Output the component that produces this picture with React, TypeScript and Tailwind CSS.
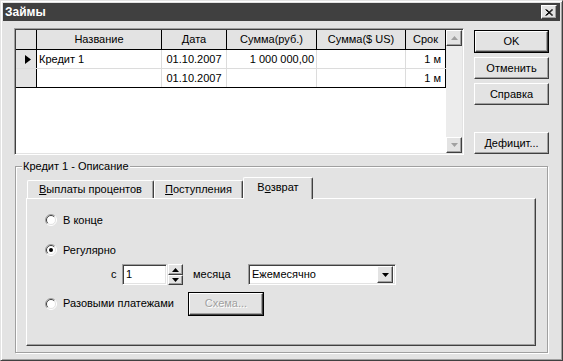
import React from 'react';

const raised =
  'border border-t-white border-l-white border-r-[#404040] border-b-[#404040] shadow-[inset_-1px_-1px_0_#a0a0a0]';
const sunken =
  'border border-t-[#a0a0a0] border-l-[#a0a0a0] border-r-white border-b-white shadow-[inset_1px_1px_0_#404040,inset_-1px_-1px_0_#e3e3e3]';

function Btn({
  label,
  isDefault,
  disabled,
  className = '',
}: {
  label: string;
  isDefault?: boolean;
  disabled?: boolean;
  className?: string;
}) {
  const text = disabled ? 'text-[#a0a0a0] [text-shadow:1px_1px_0_#ffffff]' : 'text-black';
  if (isDefault) {
    return (
      <div className={`border border-black ${className}`}>
        <div className={`h-full flex items-center justify-center ${raised} ${text}`}>{label}</div>
      </div>
    );
  }
  return <div className={`flex items-center justify-center ${raised} ${text} ${className}`}>{label}</div>;
}

function Radio({ checked }: { checked?: boolean }) {
  return (
    <svg width="12" height="12" viewBox="0 0 12 12" className="shrink-0">
      <circle cx="6" cy="6" r="5" fill="white" />
      <path d="M2.1 9.9 A5.5 5.5 0 0 1 9.9 2.1" fill="none" stroke="#a0a0a0" strokeWidth="1" />
      <path d="M9.9 2.1 A5.5 5.5 0 0 1 2.1 9.9" fill="none" stroke="#ffffff" strokeWidth="1" />
      <path d="M2.8 9.2 A4.5 4.5 0 0 1 9.2 2.8" fill="none" stroke="#404040" strokeWidth="1" />
      <path d="M9.2 2.8 A4.5 4.5 0 0 1 2.8 9.2" fill="none" stroke="#e3e3e3" strokeWidth="1" />
      {checked && <circle cx="6" cy="6" r="2" fill="black" />}
    </svg>
  );
}

function ArrowUp({ color = 'black' }: { color?: string }) {
  return (
    <svg width="7" height="4" viewBox="0 0 7 4">
      <polygon points="0,4 3.5,0 7,4" fill={color} />
    </svg>
  );
}

function ArrowDown({ color = 'black' }: { color?: string }) {
  return (
    <svg width="7" height="4" viewBox="0 0 7 4">
      <polygon points="0,0 7,0 3.5,4" fill={color} />
    </svg>
  );
}

const header = ['Название', 'Дата', 'Сумма(руб.)', 'Сумма($ US)', 'Срок'];
const widths = ['w-[125px]', 'w-[65px]', 'w-[90px]', 'w-[89px]', 'w-[40px]'];
const aligns = ['justify-start pl-[2px]', 'justify-center', 'justify-end pr-[2px]', 'justify-end pr-[2px]', 'justify-end pr-[4px]'];

const rows = [
  { marker: true, cells: ['Кредит 1', '01.10.2007', '1 000 000,00', '', '1 м'] },
  { marker: false, cells: ['', '01.10.2007', '', '', '1 м'] },
];

function Grid() {
  return (
    <div className={`w-[450px] h-[127px] ${sunken} p-px flex`}>
      <div className="flex-1 bg-white flex flex-col">
        <div className="flex h-[20px] bg-[#e3e3e3] border-b border-black">
          <div className="w-[21px] border-r border-black" />
          {header.map((h, i) => (
            <div key={h} className={`${widths[i]} border-r border-black flex items-center justify-center`}>
              {h}
            </div>
          ))}
        </div>
        {rows.map((r, ri) => {
          const bottom = ri === rows.length - 1 ? 'border-black' : 'border-[#dcdcdc]';
          return (
            <div key={ri} className={`flex h-[19px] border-b ${bottom}`}>
              <div className="w-[21px] bg-[#e3e3e3] border-r border-black flex items-center pl-[9px]">
                {r.marker && (
                  <svg width="6" height="9" viewBox="0 0 6 9">
                    <polygon points="0,0 6,4.5 0,9" fill="black" />
                  </svg>
                )}
              </div>
              {r.cells.map((c, i) => (
                <div
                  key={i}
                  className={`${widths[i]} border-r ${i === 4 ? 'border-black' : 'border-[#dcdcdc]'} flex items-center ${aligns[i]}`}
                >
                  {c}
                </div>
              ))}
            </div>
          );
        })}
      </div>
      <div className="w-[16px] flex flex-col bg-[#ececec]">
        <div className={`h-[16px] bg-[#e3e3e3] flex items-center justify-center ${raised}`}>
          <ArrowUp color="#a0a0a0" />
        </div>
        <div className="flex-1" />
        <div className={`h-[16px] bg-[#e3e3e3] flex items-center justify-center ${raised}`}>
          <ArrowDown color="#a0a0a0" />
        </div>
      </div>
    </div>
  );
}

function Tab({ children, selected, w }: { children: React.ReactNode; selected?: boolean; w: string }) {
  return (
    <div
      className={`${w} ${
        selected ? 'h-[22px] -mb-px relative z-10 pb-[3px]' : 'h-[18px]'
      } bg-[#e3e3e3] border-t border-l border-r border-t-white border-l-white border-r-[#404040] shadow-[inset_-1px_0_0_#a0a0a0] rounded-t-[2px] flex items-center justify-center`}
    >
      {children}
    </div>
  );
}

export default function App() {
  return (
    <div className="w-[563px] h-[361px] bg-[#e3e3e3] border border-t-[#e3e3e3] border-l-[#e3e3e3] border-r-[#404040] border-b-[#404040] shadow-[inset_1px_1px_0_#ffffff,inset_-1px_-1px_0_#a0a0a0] p-[2px] flex flex-col font-['Liberation_Sans',Arial,sans-serif] text-[11px] leading-[13px] text-black select-none">
      {/* title bar */}
      <div className="h-[18px] bg-[#404040] flex items-center justify-between pl-[2px] pr-[3px]">
        <span className="text-white font-bold text-[12px]">Займы</span>
        <div className={`w-[16px] h-[14px] bg-[#e3e3e3] flex items-center justify-center ${raised}`}>
          <svg width="8" height="7" viewBox="0 0 8 7">
            <path d="M0.5 0.5 L7 6.5 M1.5 0.5 L8 6.5 M7 0.5 L0.5 6.5 M8 0.5 L1.5 6.5" stroke="black" strokeWidth="1" />
          </svg>
        </div>
      </div>

      {/* grid + buttons */}
      <div className="flex mt-[7px] pl-[11px]">
        <Grid />
        <div className="ml-[10px] w-[75px] pt-[2px] pb-px flex flex-col gap-[4px]">
          <Btn label="OK" isDefault className="h-[23px]" />
          <Btn label="Отменить" className="h-[22px]" />
          <Btn label="Справка" className="h-[22px]" />
          <Btn label="Дефицит..." className="h-[22px] mt-auto" />
        </div>
      </div>

      {/* group box */}
      <div className="relative ml-[12px] mt-[11px] w-[533px] h-[187px] border border-[#a0a0a0] shadow-[inset_1px_1px_0_#ffffff,1px_1px_0_#ffffff] pt-[10px] pl-[10px]">
        <span className="absolute left-[6px] -top-[7px] px-px bg-[#e3e3e3]">Кредит 1 - Описание</span>

        <div className="flex items-end h-[21px] pl-px">
          <Tab w="w-[127px]">
            <span>
              <u>В</u>ыплаты процентов
            </span>
          </Tab>
          <Tab w="w-[89px]">
            <span>
              <u>П</u>оступления
            </span>
          </Tab>
          <Tab w="w-[70px]" selected>
            <span>
              В<u>о</u>зврат
            </span>
          </Tab>
        </div>

        <div className="w-[510px] h-[148px] border border-t-white border-l-white border-r-[#404040] border-b-[#404040] shadow-[inset_-1px_-1px_0_#a0a0a0] pt-[14px] flex flex-col">
          <div className="flex items-center h-[14px] pl-[18px] gap-[6px]">
            <Radio />
            <span>В конце</span>
          </div>
          <div className="flex items-center h-[14px] pl-[18px] gap-[6px] mt-[16px]">
            <Radio checked />
            <span>Регулярно</span>
          </div>
          <div className="flex items-center h-[21px] mt-[7px] pl-[84px]">
            <span className="w-[11px]">с</span>
            <div className={`w-[45px] h-[21px] bg-white ${sunken} flex items-center pl-[3px]`}>1</div>
            <div className="ml-px w-[15px] h-[21px] flex flex-col">
              <div className={`h-[11px] bg-[#e3e3e3] flex items-center justify-center ${raised}`}>
                <ArrowUp />
              </div>
              <div className={`h-[10px] bg-[#e3e3e3] flex items-center justify-center ${raised}`}>
                <ArrowDown />
              </div>
            </div>
            <span className="ml-[10px] w-[55px]">месяца</span>
            <div className={`w-[148px] h-[21px] bg-white ${sunken} flex items-center justify-between pl-[3px] pr-[2px]`}>
              <span>Ежемесячно</span>
              <div className={`w-[16px] h-[17px] bg-[#e3e3e3] flex items-center justify-center ${raised}`}>
                <ArrowDown />
              </div>
            </div>
          </div>
          <div className="flex items-center h-[23px] mt-[7px] pl-[18px]">
            <Radio />
            <span className="ml-[6px] w-[125px]">Разовыми платежами</span>
            <Btn label="Схема..." isDefault disabled className="w-[76px] h-[24px]" />
          </div>
        </div>
      </div>
    </div>
  );
}
